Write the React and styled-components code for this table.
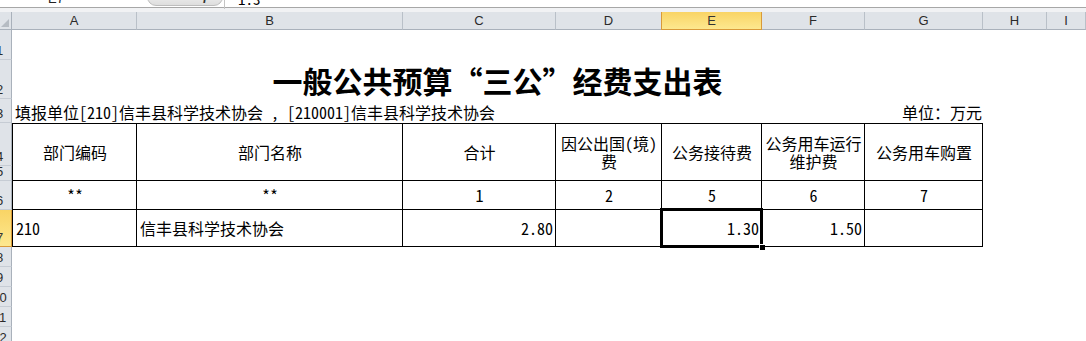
import styled, { createGlobalStyle, css } from "styled-components"

const GlobalStyle = createGlobalStyle`
  html, body {
    margin: 0;
    padding: 0;
    background: #fff;
    overflow: hidden;
  }
  body {
    font-family: "Noto Sans CJK SC", sans-serif;
  }
`

const COLS = [
    { key: "A", w: 125 },
    { key: "B", w: 266 },
    { key: "C", w: 153 },
    { key: "D", w: 106 },
    { key: "E", w: 100 },
    { key: "F", w: 103 },
    { key: "G", w: 118 },
    { key: "H", w: 64 },
    { key: "I", w: 0 },
]

const ROWS = [30, 39, 24, 43, 15, 29, 37, 20, 20, 20, 20, 20]

const HEADERS = [
    "部门编码",
    "部门名称",
    "合计",
    ["因公出国(境)", "费"],
    "公务接待费",
    ["公务用车运行", "维护费"],
    "公务用车购置",
]

const CODES = ["**", "**", "1", "2", "5", "6", "7"]

const DATA = [
    { text: "210", align: "left" },
    { text: "信丰县科学技术协会", align: "left" },
    { text: "2.80", align: "right" },
    { text: "", align: "right" },
    { text: "1.30", align: "right", selected: true },
    { text: "1.50", align: "right" },
    { text: "", align: "right" },
]

const cellFont = css`
    font-family: "Noto Sans CJK SC", sans-serif;
    font-feature-settings: "hwid" 1;
    font-size: 16px;
    color: #000;
`

const App = () => {
    return (
        <>
            <GlobalStyle />
            <FormulaBar>
                <NameBox>E7</NameBox>
                <DropArrow />
                <FxPill>
                    <Fx>fx</Fx>
                </FxPill>
                <FormulaText>1.3</FormulaText>
            </FormulaBar>
            <Gap />
            <Sheet>
                <Corner>
                    <svg width="8" height="8" viewBox="0 0 8 8">
                        <polygon points="8,0 8,8 0,8" fill="#b6bcc3" />
                    </svg>
                </Corner>
                {COLS.map((c, i) => (
                    <ColHead key={c.key} $col={i + 2} $active={c.key === "E"}>
                        {c.key}
                    </ColHead>
                ))}
                {ROWS.map((h, i) => (
                    <RowHead key={i} $row={i + 2} $active={i === 6}>
                        {i + 1}
                    </RowHead>
                ))}

                <Title>一般公共预算“三公”经费支出表</Title>
                <InfoLine>
                    <span>填报单位[210]信丰县科学技术协会 ， [210001]信丰县科学技术协会</span>
                    <span>单位：万元</span>
                </InfoLine>

                {HEADERS.map((h, i) => (
                    <Cell key={"h" + i} $col={i + 2} $row={5} $span={2} $top $first={i === 0} $align="center">
                        {Array.isArray(h) ? (
                            <Wrap>
                                {h[0]}
                                <br />
                                {h[1]}
                            </Wrap>
                        ) : (
                            h
                        )}
                    </Cell>
                ))}
                {CODES.map((t, i) => (
                    <Cell key={"c" + i} $col={i + 2} $row={7} $first={i === 0} $align="center">
                        {t}
                    </Cell>
                ))}
                {DATA.map((d, i) => (
                    <Cell key={"d" + i} $col={i + 2} $row={8} $first={i === 0} $align={d.align}>
                        {d.text}
                        {d.selected && (
                            <>
                                <Selection />
                                <FillHandle />
                            </>
                        )}
                    </Cell>
                ))}
            </Sheet>
        </>
    )
}

const FormulaBar = styled.div`
    display: flex;
    align-items: center;
    height: 21px;
    margin-top: -13px;
    padding-top: 2px;
    box-sizing: border-box;
    border-bottom: 1px solid #a7a7a7;
    background: #fff;
    font-family: "Liberation Sans", sans-serif;
    font-size: 13px;
    color: #222;
`
const NameBox = styled.div`
    width: 135px;
    padding-left: 48px;
    box-sizing: border-box;
`
const DropArrow = styled.span`
    width: 0;
    height: 0;
    border-left: 3px solid transparent;
    border-right: 3px solid transparent;
    border-top: 3px solid #444;
`
const FxPill = styled.div`
    display: flex;
    justify-content: flex-end;
    align-items: center;
    margin-left: 6px;
    width: 76px;
    height: 20px;
    margin-top: -4px;
    box-sizing: border-box;
    padding-right: 8px;
    border: 1px solid #bdbdbd;
    border-radius: 9px;
    background: linear-gradient(#fafafa, #dedede);
`
const Fx = styled.span`
    font-family: "Liberation Serif", serif;
    font-style: italic;
    font-weight: bold;
    font-size: 13px;
    color: #333;
`
const FormulaText = styled.div`
    ${cellFont};
    font-size: 15px;
    height: 21px;
    margin-left: 1px;
    padding-left: 13px;
    display: flex;
    align-items: center;
    border-left: 1px solid #c4c4c4;
`
const Gap = styled.div`
    height: 4px;
    background: #f1f2f4;
`
const Sheet = styled.div`
    display: grid;
    margin-left: -12px;
    grid-template-columns: 24px ${COLS.slice(0, 8).map((c) => c.w + "px").join(" ")} 1fr;
    grid-template-rows: 18px ${ROWS.map((h) => h + "px").join(" ")};
`
const headBase = css`
    box-sizing: border-box;
    font-family: "Liberation Sans", sans-serif;
    font-size: 13px;
    color: #2b2b2b;
    background: #dfe3e8;
`
const activeHead = css`
    background: linear-gradient(#f9d465, #fde88f);
    border-color: #d99a3a;
    color: #333;
`
const Corner = styled.div`
    ${headBase};
    grid-column: 1;
    grid-row: 1;
    display: flex;
    justify-content: flex-end;
    align-items: flex-end;
    padding: 0 2px 2px 0;
    border-right: 1px solid #a9b1bb;
    border-bottom: 1px solid #a9b1bb;
`
const ColHead = styled.div`
    ${headBase};
    grid-column: ${(p) => p.$col};
    grid-row: 1;
    display: flex;
    justify-content: center;
    align-items: center;
    border-right: 1px solid #b9c0c8;
    border-bottom: 1px solid #a9b1bb;
    ${(p) => p.$active && activeHead};
    ${(p) => p.$active && "border-left: 1px solid #d99a3a; margin-left: -1px;"}
`
const RowHead = styled.div`
    ${headBase};
    grid-column: 1;
    grid-row: ${(p) => p.$row};
    display: flex;
    justify-content: center;
    align-items: flex-end;
    padding-bottom: 2px;
    overflow: hidden;
    line-height: 13px;
    border-right: 1px solid #a9b1bb;
    border-bottom: 1px solid #c6ccd4;
    ${(p) => p.$active && activeHead};
`
const Title = styled.div`
    grid-column: 2 / 9;
    grid-row: 2 / 4;
    display: flex;
    justify-content: center;
    align-items: flex-end;
    padding-bottom: 4px;
    font-family: "Noto Sans CJK SC", sans-serif;
    font-weight: 700;
    font-size: 30px;
    line-height: 30px;
    color: #000;
`
const InfoLine = styled.div`
    ${cellFont};
    grid-column: 2 / 9;
    grid-row: 4;
    display: flex;
    justify-content: space-between;
    align-items: center;
    padding: 1px 1px 0 3px;
    white-space: nowrap;
    line-height: 16px;
`
const Cell = styled.div`
    ${cellFont};
    position: relative;
    box-sizing: border-box;
    grid-column: ${(p) => p.$col};
    grid-row: ${(p) => p.$row} / span ${(p) => p.$span || 1};
    display: flex;
    align-items: center;
    justify-content: ${(p) =>
        p.$align === "left" ? "flex-start" : p.$align === "right" ? "flex-end" : "center"};
    padding: 0 2px 0 3px;
    white-space: nowrap;
    line-height: 18px;
    border-right: 1px solid #000;
    border-bottom: 1px solid #000;
    ${(p) => p.$top && "border-top: 1px solid #000;"}
    ${(p) => p.$first && "border-left: 1px solid #000;"}
`
const Wrap = styled.span`
    text-align: center;
    line-height: 18px;
`
const Selection = styled.span`
    position: absolute;
    top: -2px;
    left: -2px;
    right: -2px;
    bottom: -2px;
    border: 3px double #000;
    pointer-events: none;
`
const FillHandle = styled.span`
    position: absolute;
    right: -5px;
    bottom: -5px;
    width: 5px;
    height: 5px;
    background: #000;
    border: 1px solid #fff;
`

export default App
